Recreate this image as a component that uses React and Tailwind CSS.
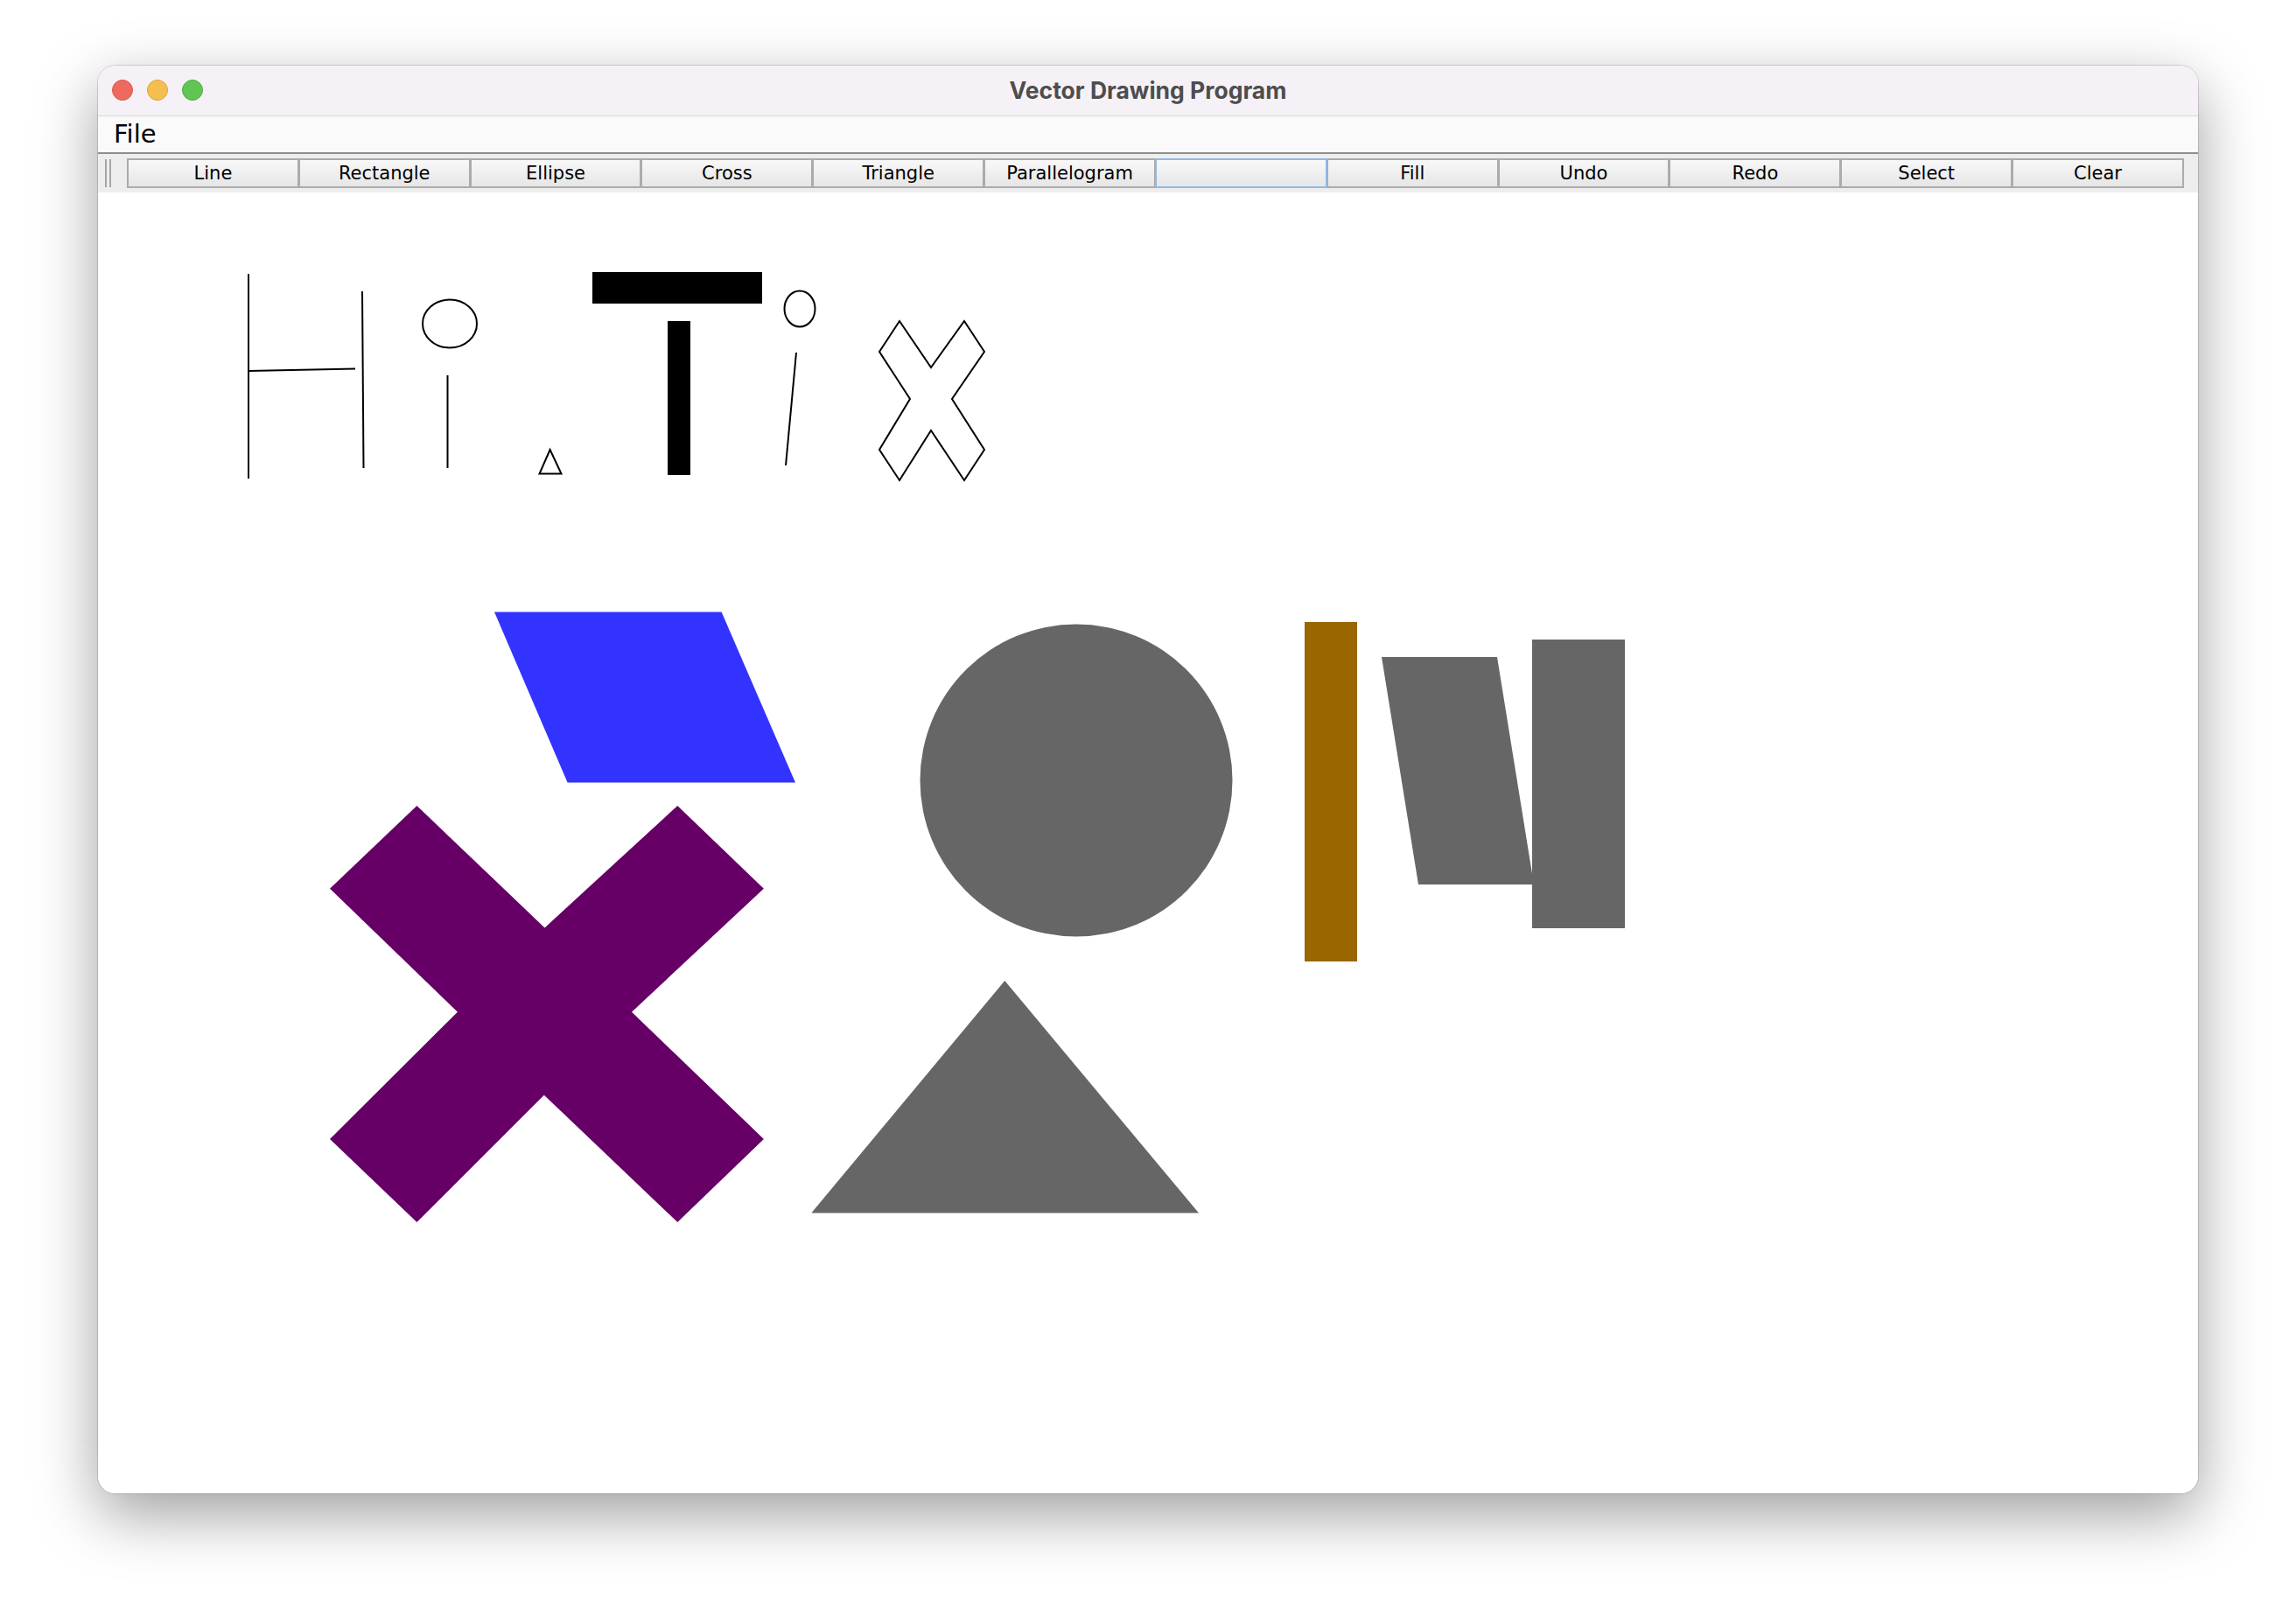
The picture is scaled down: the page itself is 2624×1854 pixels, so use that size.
import React from "react";

const buttons = ["Line","Rectangle","Ellipse","Cross","Triangle","Parallelogram","","Fill","Undo","Redo","Select","Clear"];

function Canvas() {
  return (
    <svg width="2400" height="1487" viewBox="112 220 2400 1487" className="block">
      <g stroke="#000" strokeWidth="2" fill="none">
        <line x1="284" y1="313" x2="284" y2="547" />
        <line x1="284" y1="424" x2="406" y2="421.5" />
        <line x1="414" y1="333" x2="415.5" y2="535" />
        <ellipse cx="514" cy="370" rx="31" ry="27.5" />
        <line x1="511.5" y1="429" x2="511.5" y2="535" />
        <polygon points="628.6,514 616.5,541.5 641.5,541.5" />
        <ellipse cx="914" cy="353" rx="17.5" ry="20.5" />
        <line x1="910" y1="403" x2="898" y2="532" />
        <polygon points="1028,367 1064,420 1102,367 1125,402 1088,456 1125,514 1102,549 1064,492 1028,549 1005,514 1040,456 1005,402" />
      </g>
      <rect x="677" y="311" width="194" height="36" fill="#000" />
      <rect x="763" y="367" width="26" height="176" fill="#000" />
      <polygon points="565,699.5 824.6,699.5 909,894.6 648.6,894.6" fill="#3333ff" />
      <polygon points="476.4,921 622.5,1060.4 774.3,921 872.9,1015.7 722,1156.7 872.9,1302 774.3,1397 621.8,1251.7 476.4,1397 377,1302 522.9,1156.7 377,1015.7" fill="#660066" />
      <circle cx="1230" cy="892" r="178.5" fill="#666666" />
      <polygon points="1148.3,1121 1370,1386.5 927.3,1386.5" fill="#666666" />
      <rect x="1491" y="711" width="60" height="388" fill="#996600" />
      <polygon points="1579,751 1711,751 1753,1011 1621,1011" fill="#666666" />
      <rect x="1751" y="731" width="106" height="330" fill="#666666" />
    </svg>
  );
}

export default function App() {
  return (
    <div className="w-[2624px] h-[1854px] bg-white pt-[75px] pl-[112px]" style={{ fontFamily: "'DejaVu Sans', sans-serif" }}>
      <div className="w-[2400px] h-[1632px] rounded-[20px] overflow-hidden flex flex-col bg-white shadow-[0_24px_70px_rgba(0,0,0,0.38),0_0_0_1px_rgba(0,0,0,0.14)]">
        {/* Title bar */}
        <div className="relative h-[58px] shrink-0 bg-[#f6f1f6] border-b border-[#dadada] flex items-center justify-center">
          <div className="absolute left-[16px] top-[16px] flex gap-[16px]">
            <div className="w-[24px] h-[24px] rounded-full bg-[#ee6a5f] border border-[#d8574c]" />
            <div className="w-[24px] h-[24px] rounded-full bg-[#f5bf4f] border border-[#d9a43c]" />
            <div className="w-[24px] h-[24px] rounded-full bg-[#61c554] border border-[#4fab43]" />
          </div>
          <span className="text-[26.5px] font-bold text-[#4d4d4d]" style={{ fontFamily: "Inter, sans-serif" }}>Vector Drawing Program</span>
        </div>
        {/* Menu bar */}
        <div className="h-[41px] shrink-0 bg-[#fafafa] flex items-center pl-[18px]">
          <span className="text-[29px] text-black leading-none">File</span>
        </div>
        <div className="h-[2px] shrink-0 bg-[#8e8e8e]" />
        {/* Toolbar */}
        <div className="h-[44px] shrink-0 bg-[#eeeeee] flex items-center pr-[16px]">
          <div className="ml-[8px] w-[8px] h-[32px] flex gap-[3px]">
            <div className="w-[2px] h-full bg-[#a6a6a6]" />
            <div className="w-[2px] h-full bg-[#a6a6a6]" />
          </div>
          <div className="ml-[17px] flex-1 flex h-[34px]">
            {buttons.map((b, i) => (
              <div
                key={i}
                className={
                  i === 6
                    ? "flex-1 -ml-px relative z-10 border-2 border-[#92b8e0] bg-gradient-to-b from-[#f8f8f8] to-[#e6e6e6] flex items-center justify-center pt-[2px] text-[21px] text-black"
                    : i === 0
                    ? "flex-1 border-2 border-[#ababab] bg-gradient-to-b from-[#f8f8f8] to-[#e6e6e6] flex items-center justify-center pt-[2px] text-[21px] text-black"
                    : "flex-1 -ml-px border-2 border-[#ababab] bg-gradient-to-b from-[#f8f8f8] to-[#e6e6e6] flex items-center justify-center pt-[2px] text-[21px] text-black"
                }
              >
                {b}
              </div>
            ))}
          </div>
        </div>
        {/* Canvas */}
        <div className="flex-1 bg-white">
          <Canvas />
        </div>
      </div>
    </div>
  );
}
